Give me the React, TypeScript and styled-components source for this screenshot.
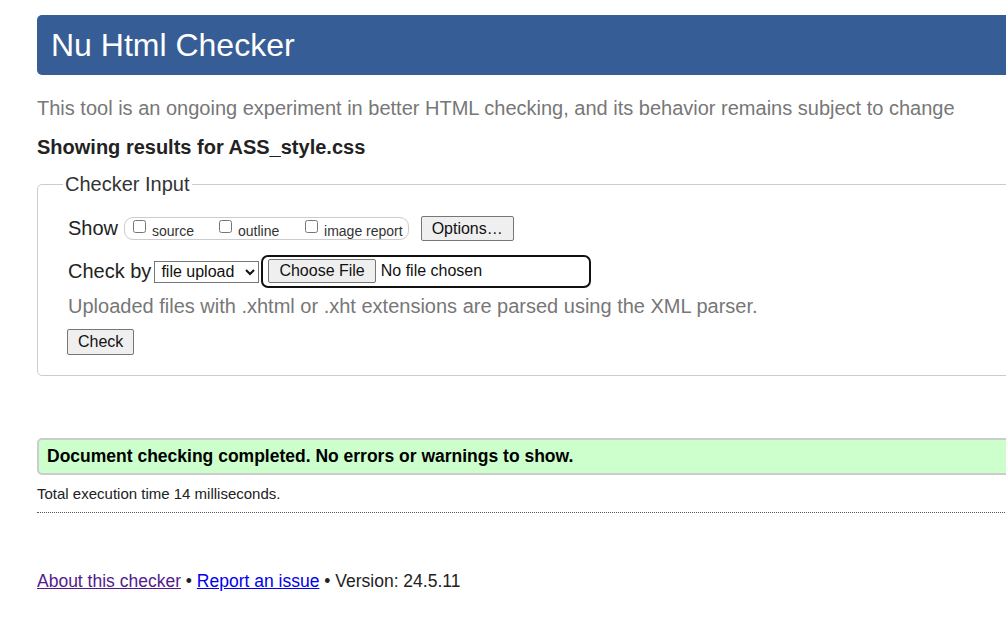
import React from "react";
import styled, { createGlobalStyle } from "styled-components";

const Global = createGlobalStyle`
  html, body { margin: 0; padding: 0; background: #fff; overflow: hidden; }
  body { font-family: "Liberation Sans", Arial, sans-serif; color: #111; }
`;

const Page = styled.div`
  width: 1060px;
  padding: 15px 0 0 37px;
  display: flex;
  flex-direction: column;
`;

const Header = styled.header`
  height: 60px;
  background: #365d95;
  border-radius: 5px;
  display: flex;
  align-items: center;
  padding-left: 14px;
`;

const Title = styled.h1`
  margin: 0;
  font-size: 32px;
  font-weight: normal;
  color: #fff;
  line-height: 1;
`;

const Intro = styled.p`
  margin: 21px 0 0;
  font-size: 20px;
  line-height: 24px;
  color: #777;
`;

const Showing = styled.h2`
  margin: 15px 0 0;
  font-size: 20px;
  line-height: 24px;
  font-weight: bold;
  color: #222;
`;

const Fieldset = styled.fieldset`
  margin: 13px 0 0;
  border: 1px solid #ccc;
  border-radius: 5px;
  padding: 20px 30px 20px;
  display: flex;
  flex-direction: column;
  min-width: 0;
`;

const Legend = styled.legend`
  font-size: 20px;
  line-height: 24px;
  color: #333;
  padding: 0 2px;
  margin-left: -5px;
`;

const Row = styled.div<{ $gap?: number }>`
  display: flex;
  align-items: center;
  font-size: 20px;
  color: #222;
  margin-top: ${(p) => p.$gap ?? 0}px;
`;

const RowLabel = styled.span`
  margin-right: 6px;
`;

const CheckGroup = styled.div`
  display: inline-grid;
  grid-template-columns: 86px 86px max-content;
  align-items: center;
  height: 23px;
  box-sizing: border-box;
  border: 1px solid #ccc;
  border-radius: 9px;
  padding: 0 5px 0 8px;
  white-space: nowrap;
`;

const CheckItem = styled.label`
  display: inline-flex;
  align-items: center;
  font-size: 14px;
  color: #333;
  white-space: nowrap;
  input {
    margin: 0 6px 0 0;
    width: 13px;
    height: 13px;
    position: relative;
    top: -2px;
  }
  span {
    position: relative;
    top: 2px;
  }
`;

const Button = styled.button`
  font-family: "Liberation Sans", Arial, sans-serif;
  font-size: 16px;
  height: 26px;
  padding: 0 10px;
  background: #efefef;
  color: #111;
  border: 1px solid #767676;
  border-radius: 2px;
  box-sizing: border-box;
`;

const OptionsButton = styled(Button)`
  margin-left: 12px;
  height: 25px;
`;

const Select = styled.select`
  font-family: "Liberation Sans", Arial, sans-serif;
  font-size: 16px;
  height: 22px;
  width: 105px;
  box-sizing: border-box;
  border: 1px solid #767676;
  border-radius: 0;
  background: #fff;
  color: #111;
  margin-left: -3px;
  padding: 0 2px;
`;

const FileInput = styled.input`
  font-family: "Liberation Sans", Arial, sans-serif;
  font-size: 16px;
  width: 330px;
  height: 33px;
  box-sizing: border-box;
  margin-left: 2px;
  border: 2px solid #111;
  border-radius: 7px;
  padding: 2px 5px;
  color: #111;
  &::file-selector-button {
    font-family: "Liberation Sans", Arial, sans-serif;
    font-size: 16px;
    height: 24px;
    padding: 0 10px;
    margin-right: 5px;
    background: #efefef;
    border: 1px solid #767676;
    border-radius: 2px;
    color: #111;
  }
`;

const Help = styled.p`
  margin: 6px 0 0;
  font-size: 20px;
  line-height: 24px;
  color: #777;
`;

const CheckButton = styled(Button)`
  margin-top: 11px;
  align-self: flex-start;
  margin-left: -1px;
`;

const Success = styled.div`
  margin-top: 62px;
  height: 37px;
  box-sizing: border-box;
  background: #ccffcc;
  border: 2px solid #ccc;
  border-radius: 5px;
  display: flex;
  align-items: center;
  padding-left: 8px;
  font-size: 17.5px;
  font-weight: bold;
  color: #000;
`;

const Timing = styled.p`
  margin: 10px 0 0;
  font-size: 15px;
  line-height: 18px;
  color: #222;
`;

const Rule = styled.hr`
  margin: 9px 0 0;
  border: 0;
  border-top: 1px dotted #555;
  height: 0;
`;

const Footer = styled.p`
  margin: 57px 0 0;
  font-size: 17.5px;
  line-height: 22px;
  color: #222;
`;

const Link = styled.a<{ $visited?: boolean }>`
  color: ${(p) => (p.$visited ? "#551a8b" : "#0000ee")};
  text-decoration: underline;
`;

export default function App() {
  return (
    <>
      <Global />
      <Page>
        <Header>
          <Title>Nu Html Checker</Title>
        </Header>
        <Intro>
          This tool is an ongoing experiment in better HTML checking, and its behavior remains subject to change
        </Intro>
        <Showing>Showing results for ASS_style.css</Showing>
        <Fieldset>
          <Legend>Checker Input</Legend>
          <Row>
            <RowLabel>Show</RowLabel>
            <CheckGroup>
              <CheckItem>
                <input type="checkbox" />
                <span>source</span>
              </CheckItem>
              <CheckItem>
                <input type="checkbox" />
                <span>outline</span>
              </CheckItem>
              <CheckItem>
                <input type="checkbox" />
                <span>image report</span>
              </CheckItem>
            </CheckGroup>
            <OptionsButton>Options…</OptionsButton>
          </Row>
          <Row $gap={14}>
            <RowLabel>Check by</RowLabel>
            <Select defaultValue="file">
              <option value="address">address</option>
              <option value="file">file upload</option>
              <option value="text">text input</option>
            </Select>
            <FileInput type="file" />
          </Row>
          <Help>Uploaded files with .xhtml or .xht extensions are parsed using the XML parser.</Help>
          <CheckButton>Check</CheckButton>
        </Fieldset>
        <Success>Document checking completed. No errors or warnings to show.</Success>
        <Timing>Total execution time 14 milliseconds.</Timing>
        <Rule />
        <Footer>
          <Link $visited href="#about">About this checker</Link> •{" "}
          <Link href="#report">Report an issue</Link> • Version: 24.5.11
        </Footer>
      </Page>
    </>
  );
}
